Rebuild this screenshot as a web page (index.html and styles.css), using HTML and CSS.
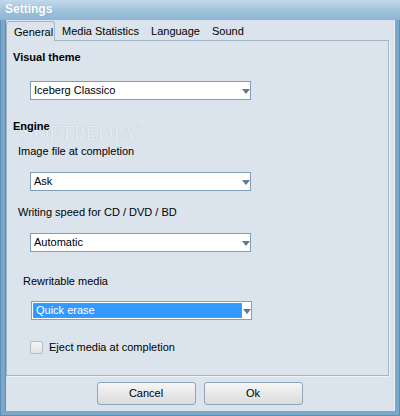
FILE: index.html
```html
<!DOCTYPE html>
<html>
<head>
<meta charset="utf-8">
<title>Settings</title>
<link rel="stylesheet" href="styles.css">
</head>
<body>
<div class="window">
  <div class="titlebar"><span class="title">Settings</span></div>
  <div class="frame">
    <div class="tabs">
      <div class="tab active">General</div>
      <div class="tab">Media Statistics</div>
      <div class="tab">Language</div>
      <div class="tab">Sound</div>
    </div>
    <div class="panel">
      <div class="heading h-visual">Visual theme</div>
      <div class="select s1"><span class="value">Iceberg Classico</span><span class="arrow"></span></div>
      <div class="heading h-engine">Engine</div>
      <div class="label l-image">Image file at completion</div>
      <div class="select s2"><span class="value">Ask</span><span class="arrow"></span></div>
      <div class="label l-speed">Writing speed for CD / DVD / BD</div>
      <div class="select s3"><span class="value">Automatic</span><span class="arrow"></span></div>
      <div class="label l-rewrite">Rewritable media</div>
      <div class="select s4 focused"><span class="value">Quick erase</span><span class="arrow"></span></div>
      <div class="check-row"><span class="checkbox"></span><span class="check-label">Eject media at completion</span></div>
      <div class="watermark">SOFTPEDIA<sup>™</sup></div>
    </div>
    <div class="buttons">
      <div class="button">Cancel</div>
      <div class="button">Ok</div>
    </div>
  </div>
</div>
</body>
</html>
```
FILE: styles.css
```css
* { box-sizing: border-box; }
html, body { margin: 0; padding: 0; }
body {
  width: 400px;
  height: 416px;
  overflow: hidden;
  font-family: "Liberation Sans", Arial, sans-serif;
  font-size: 11px;
  color: #000;
  background: #dbe4ec;
}
.window {
  width: 400px;
  height: 416px;
  display: flex;
  flex-direction: column;
  background: #5f8fb7;
  padding: 0 1px 1px 1px;
}
.titlebar {
  height: 20px;
  flex: none;
  background: linear-gradient(#c3d9ea, #9cc0da 60%, #8cb5d3);
  margin: 0 -1px;
  padding: 2px 0 0 5px;
}
.title {
  font-weight: bold;
  font-size: 12px;
  color: #fff;
  line-height: 15px;
  text-shadow: 0 0 1px rgba(90,130,170,0.4);
}
.frame {
  flex: 1;
  display: flex;
  flex-direction: column;
  background: #dbe4ec;
  border: 4px solid #7aa8cb;
  border-top: 0;
  box-shadow: inset 1px 0 0 #5f8fb7, inset -1px 0 0 #e9f0f5;
  padding: 0 6px 0 1px;
}
.tabs {
  height: 20px;
  flex: none;
  display: flex;
  align-items: flex-end;
  position: relative;
  z-index: 2;
}
.tab {
  height: 20px;
  line-height: 20px;
  padding: 1px 5px 0 7px;
  white-space: nowrap;
}
.tab.active {
  width: 49px;
  height: 20px;
  margin-bottom: -1px;
  background: #dbe4ec;
  border: 1px solid #a3b6c6;
  border-bottom: 0;
  border-radius: 3px 3px 0 0;
  padding: 1px 0 0 7px;
  line-height: 19px;
}
.panel {
  height: 336px;
  flex: none;
  position: relative;
  border: 1px solid #a3b6c6;
  box-shadow: 1px 1px 0 #eef3f7;
  padding: 0 0 0 6px;
  display: flex;
  flex-direction: column;
  align-items: flex-start;
}
.heading, .label, .check-label { line-height: 13px; white-space: nowrap; position: relative; z-index: 1; }
.heading { font-weight: bold; }
.h-visual { margin-top: 10px; }
.h-engine { margin-top: 20px; }
.l-image { margin-top: 12px; margin-left: 5px; }
.l-speed { margin-top: 15px; margin-left: 5px; }
.l-rewrite { margin-top: 23px; margin-left: 10px; }
.select {
  width: 221px;
  height: 19px;
  background: #fff;
  border: 1px solid #7f9db9;
  margin-left: 17px;
  display: flex;
  align-items: center;
  position: relative;
}
.s1 { margin-top: 17px; }
.s2 { margin-top: 14px; }
.s3 { margin-top: 14px; }
.s4 { margin-top: 13px; }
.select .value {
  padding-left: 3px;
  line-height: 13px;
  flex: 1;
}
.select .arrow {
  width: 0;
  height: 0;
  border-left: 4px solid transparent;
  border-right: 4px solid transparent;
  border-top: 5px solid #66788a;
  margin-top: 1px;
}
.focused {
  width: 221px;
  margin-left: 18px;
  border-color: #8a9fb2;
  padding: 1px 0 1px 1px;
}
.focused .value {
  align-self: stretch;
  background: #3399ff;
  color: #fff;
  outline: 1px dotted #e08a00;
  outline-offset: -1px;
  padding-left: 3px;
  line-height: 15px;
  margin-right: 1px;
  flex: none;
  width: 209px;
}
.focused .arrow { margin-left: auto; }
.check-row {
  margin-top: 21px;
  margin-left: 17px;
  display: flex;
  align-items: center;
  height: 13px;
}
.checkbox {
  width: 13px;
  height: 13px;
  border: 1px solid #b4bcc4;
  border-radius: 2px;
  background: linear-gradient(#f2f3f4, #e2e5e8);
  margin-right: 6px;
}
.watermark {
  position: absolute;
  left: 15px;
  top: 73px;
  font-family: "Liberation Serif", serif;
  font-size: 21px;
  line-height: 24px;
  color: rgba(238,242,246,0.9);
  text-shadow: 0 0 1px rgba(150,165,180,0.7);
  pointer-events: none;
  z-index: 0;
}
.watermark sup { font-size: 6px; font-family: "Liberation Sans", sans-serif; vertical-align: 12px; }
.buttons {
  flex: none;
  display: flex;
  justify-content: center;
  gap: 8px;
  margin-top: 6px;
  padding-left: 4px;
}
.button {
  width: 99px;
  height: 23px;
  border: 1px solid #8fa5ba;
  border-radius: 3px;
  background: linear-gradient(#f6f6f6, #e8e8e8 50%, #dadcde);
  text-align: center;
  line-height: 21px;
}
```
